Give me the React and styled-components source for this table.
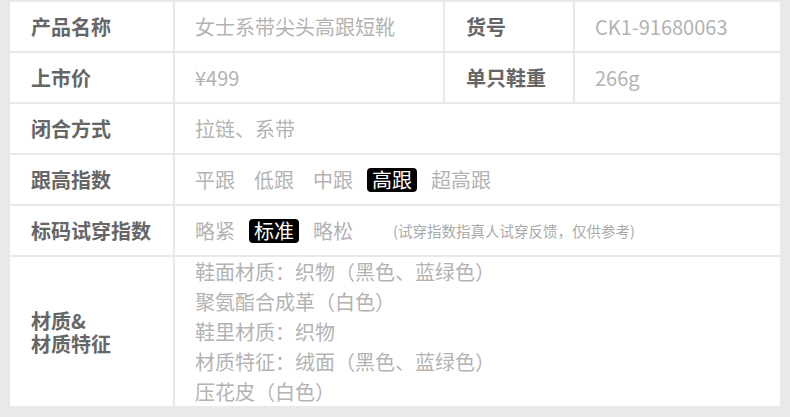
import React from 'react';
import styled, { createGlobalStyle } from 'styled-components';

const GlobalStyle = createGlobalStyle`
  html, body {
    margin: 0;
    padding: 0;
    background: #e9e9e9;
  }
  body {
    font-family: "Noto Sans CJK SC", "Noto Sans", sans-serif;
  }
`;

const Page = styled.div`
  width: 790px;
  height: 417px;
  box-sizing: border-box;
  padding: 2px 10px 0 10px;
  background: #e9e9e9;
`;

const Table = styled.div`
  display: grid;
  grid-template-columns: 163px 268px 128px 205px;
  grid-template-rows: 49px 49px 49px 49px 49px 149px;
  gap: 2px;
  width: 770px;
`;

const Label = styled.div`
  background: #fff;
  display: flex;
  align-items: center;
  padding-left: 21px;
  font-size: 20px;
  line-height: 23px;
  font-weight: 700;
  color: #666;
`;

const Value = styled.div`
  background: #fff;
  display: flex;
  align-items: center;
  padding-left: 20px;
  font-size: 20px;
  font-weight: 400;
  color: #b3b3b3;
  grid-column: ${(p) => (p.wide ? '2 / 5' : 'auto')};
`;

const Lines = styled.div`
  background: #fff;
  grid-column: 2 / 5;
  padding-left: 20px;
  font-size: 20px;
  line-height: 30px;
  color: #b3b3b3;
`;

const Options = styled.div`
  display: flex;
  align-items: center;
  gap: 9px;
  margin-left: -5px;
`;

const Option = styled.span`
  padding: 0 5px;
  height: 24px;
  line-height: 24px;
  border-radius: 4px;
  background: ${(p) => (p.active ? '#000' : 'transparent')};
  color: ${(p) => (p.active ? '#fff' : '#b3b3b3')};
`;

const Note = styled.span`
  margin-left: 26px;
  font-size: 14.5px;
  color: #aaa;
`;

const heels = ['平跟', '低跟', '中跟', '高跟', '超高跟'];
const fits = ['略紧', '标准', '略松'];

export default function App() {
  return (
    <>
      <GlobalStyle />
      <Page>
        <Table>
          <Label>产品名称</Label>
          <Value>女士系带尖头高跟短靴</Value>
          <Label>货号</Label>
          <Value>CK1-91680063</Value>

          <Label>上市价</Label>
          <Value>¥499</Value>
          <Label>单只鞋重</Label>
          <Value>266g</Value>

          <Label>闭合方式</Label>
          <Value wide>拉链、系带</Value>

          <Label>跟高指数</Label>
          <Value wide>
            <Options>
              {heels.map((h) => (
                <Option key={h} active={h === '高跟'}>{h}</Option>
              ))}
            </Options>
          </Value>

          <Label>标码试穿指数</Label>
          <Value wide>
            <Options>
              {fits.map((f) => (
                <Option key={f} active={f === '标准'}>{f}</Option>
              ))}
              <Note>(试穿指数指真人试穿反馈，仅供参考)</Note>
            </Options>
          </Value>

          <Label>
            材质&amp;
            <br />
            材质特征
          </Label>
          <Lines>
            鞋面材质：织物（黑色、蓝绿色）
            <br />
            聚氨酯合成革（白色）
            <br />
            鞋里材质：织物
            <br />
            材质特征：绒面（黑色、蓝绿色）
            <br />
            压花皮（白色）
          </Lines>
        </Table>
      </Page>
    </>
  );
}
